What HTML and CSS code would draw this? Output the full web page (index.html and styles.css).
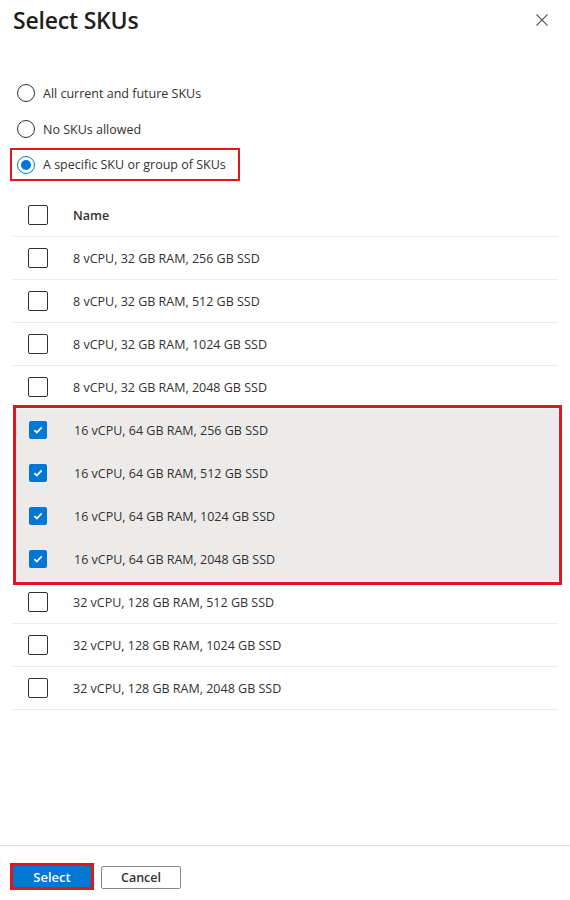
FILE: index.html
```html
<!DOCTYPE html>
<html>
<head>
<meta charset="utf-8">
<link rel="stylesheet" href="styles.css">
</head>
<body>
<div class="panel">
  <div class="header">
    <h1 class="title">Select SKUs</h1>
    <svg class="close" width="12" height="12" viewBox="0 0 12 12"><path d="M0.5 0.5 L11.5 11.5 M11.5 0.5 L0.5 11.5" stroke="#605e5c" stroke-width="1.1" fill="none"/></svg>
  </div>

  <div class="radios">
    <div class="option"><span class="radio"></span><span class="label">All current and future SKUs</span></div>
    <div class="option"><span class="radio"></span><span class="label">No SKUs allowed</span></div>
    <div class="option option-hl"><span class="radio radio-on"><span class="dot"></span></span><span class="label">A specific SKU or group of SKUs</span></div>
  </div>

  <div class="table">
    <div class="row head"><span class="cb"></span><span class="cell name">Name</span></div>
    <div class="row"><span class="cb"></span><span class="cell">8 vCPU, 32 GB RAM, 256 GB SSD</span></div>
    <div class="row"><span class="cb"></span><span class="cell">8 vCPU, 32 GB RAM, 512 GB SSD</span></div>
    <div class="row"><span class="cb"></span><span class="cell">8 vCPU, 32 GB RAM, 1024 GB SSD</span></div>
    <div class="row"><span class="cb"></span><span class="cell">8 vCPU, 32 GB RAM, 2048 GB SSD</span></div>
    <div class="group">
      <div class="row sel"><span class="cb cb-on"><svg width="10" height="8" viewBox="0 0 10 8"><path d="M1.3 4.2 L3.8 6.5 L8.7 1.3" stroke="#fff" stroke-width="1.7" fill="none"/></svg></span><span class="cell">16 vCPU, 64 GB RAM, 256 GB SSD</span></div>
      <div class="row sel"><span class="cb cb-on"><svg width="10" height="8" viewBox="0 0 10 8"><path d="M1.3 4.2 L3.8 6.5 L8.7 1.3" stroke="#fff" stroke-width="1.7" fill="none"/></svg></span><span class="cell">16 vCPU, 64 GB RAM, 512 GB SSD</span></div>
      <div class="row sel"><span class="cb cb-on"><svg width="10" height="8" viewBox="0 0 10 8"><path d="M1.3 4.2 L3.8 6.5 L8.7 1.3" stroke="#fff" stroke-width="1.7" fill="none"/></svg></span><span class="cell">16 vCPU, 64 GB RAM, 1024 GB SSD</span></div>
      <div class="row sel"><span class="cb cb-on"><svg width="10" height="8" viewBox="0 0 10 8"><path d="M1.3 4.2 L3.8 6.5 L8.7 1.3" stroke="#fff" stroke-width="1.7" fill="none"/></svg></span><span class="cell">16 vCPU, 64 GB RAM, 2048 GB SSD</span></div>
    </div>
    <div class="row"><span class="cb"></span><span class="cell">32 vCPU, 128 GB RAM, 512 GB SSD</span></div>
    <div class="row"><span class="cb"></span><span class="cell">32 vCPU, 128 GB RAM, 1024 GB SSD</span></div>
    <div class="row"><span class="cb"></span><span class="cell">32 vCPU, 128 GB RAM, 2048 GB SSD</span></div>
  </div>

  <div class="spacer"></div>

  <div class="footer">
    <span class="btn-wrap"><button class="btn primary">Select</button></span>
    <button class="btn secondary">Cancel</button>
  </div>
</div>
</body>
</html>
```

FILE: styles.css
```css
html, body {
  margin: 0;
  padding: 0;
  background: #ffffff;
}
body {
  font-family: "Open Sans", "Noto Sans", "Liberation Sans", sans-serif;
  color: #323130;
  font-size: 12.5px;
}
.panel {
  width: 570px;
  height: 900px;
  display: flex;
  flex-direction: column;
}
.header {
  display: flex;
  align-items: center;
  justify-content: space-between;
  padding: 0 22px 0 13px;
  height: 40px;
}
.title {
  margin: 0;
  font-size: 23px;
  font-weight: 600;
  letter-spacing: -0.2px;
  color: #201f1e;
}
.close {
  display: block;
}
.radios {
  margin-top: 35px;
  padding-left: 10px;
  display: flex;
  flex-direction: column;
  align-items: flex-start;
}
.option {
  display: flex;
  align-items: center;
  box-sizing: border-box;
  height: 36px;
  padding: 0 12px 0 5px;
  border: 2px solid transparent;
}
.option-hl {
  border-color: #e3151d;
  height: 33px;
  margin-top: 1px;
}
.radio {
  width: 18px;
  height: 18px;
  border: 1px solid #323130;
  border-radius: 50%;
  box-sizing: border-box;
  display: flex;
  align-items: center;
  justify-content: center;
  flex: none;
}
.radio-on {
  border-color: #0078d4;
}
.dot {
  width: 10px;
  height: 10px;
  border-radius: 50%;
  background: #0078d4;
}
.label {
  margin-left: 8px;
}
.table {
  margin: 13px 12px 0 13px;
  display: flex;
  flex-direction: column;
}
.row {
  display: flex;
  align-items: center;
  height: 42px;
  border-bottom: 1px solid #edebe9;
  padding-left: 15px;
}
.head .name {
  font-weight: 600;
}
.cb {
  width: 20px;
  height: 20px;
  border: 1px solid #323130;
  border-radius: 2px;
  box-sizing: border-box;
  flex: none;
  display: flex;
  align-items: center;
  justify-content: center;
}
.cell {
  margin-left: 25px;
}
.group {
  margin: -4px -4px -4px 0;
  border: 3px solid #e3151d;
  padding: 1px 1px 1px 0;
  background: #ffffff;
  display: flex;
  flex-direction: column;
}
.row.sel {
  background: #edebe9;
  border-bottom: 1px solid #edebe9;
  padding-left: 13px;
}
.cb-on {
  width: 18px;
  height: 18px;
  background: #0078d4;
  border: none;
  border-radius: 2px;
}
.row.sel .cell {
  margin-left: 27px;
}
.spacer {
  flex: 1;
}
.footer {
  border-top: 1px solid #e1dfdd;
  height: 55px;
  display: flex;
  align-items: flex-start;
  padding: 17px 0 0 10px;
  box-sizing: border-box;
}
.btn-wrap {
  border: 3px solid #e3151d;
  display: flex;
}
.btn {
  font-family: "Open Sans", "Noto Sans", "Liberation Sans", sans-serif;
  font-size: 12.5px;
  font-weight: 600;
  border-radius: 2px;
  padding: 0;
  margin: 0;
  cursor: pointer;
}
.primary {
  width: 78px;
  height: 21px;
  background: #0078d4;
  color: #ffffff;
  font-size: 13px;
  border: none;
  border-radius: 0;
}
.secondary {
  margin-left: 7px;
  margin-top: 3px;
  width: 80px;
  height: 23px;
  background: #ffffff;
  color: #323130;
  border: 1px solid #8a8886;
}
```
